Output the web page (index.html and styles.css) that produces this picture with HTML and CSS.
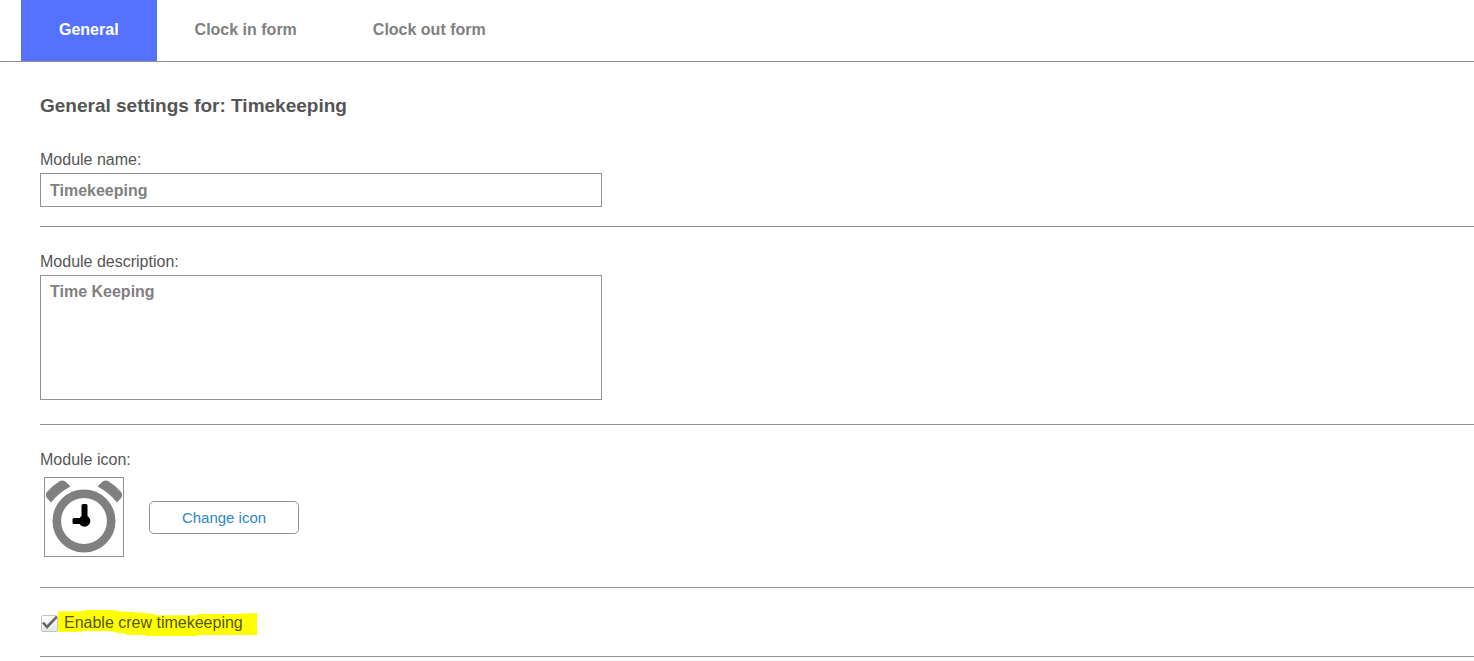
FILE: index.html
```html
<!DOCTYPE html>
<html lang="en">
	<head>
		<meta charset="utf-8">
		<title>Timekeeping settings</title>
		<link rel="stylesheet" href="styles.css">
	</head>
	<body>
		<nav class="tabs">
			<a href="#general" class="tab active">General</a>
			<a href="#clock-in" class="tab">Clock in form</a>
			<a href="#clock-out" class="tab">Clock out form</a>
		</nav>
		<form class="settings" id="general">
			<h1>General settings for: Timekeeping</h1>
			<div class="row row-name">
				<label class="caption" for="module-name">Module name:</label>
				<input type="text" class="field" id="module-name" name="name" value="Timekeeping">
			</div>
			<div class="row row-description">
				<label class="caption" for="module-description">Module description:</label>
				<textarea class="field" id="module-description" name="description">Time Keeping</textarea>
			</div>
			<div class="row row-icon">
				<div class="caption">Module icon:</div>
				<div class="icon-picker">
					<div class="icon-box">
						<svg viewBox="0 0 78 78" aria-hidden="true">
							<circle cx="39" cy="43" r="27.2" fill="none" stroke="#808080" stroke-width="8.6"/>
							<path fill="#808080" d="M6 24.500L1.500 19.500Q0 16.500 2 14Q8 7 15 3Q18.500 1.500 21 4L25.500 8.500Q14 14.500 6 24.500ZM72 24.500L76.500 19.500Q78 16.500 76 14Q70 7 63 3Q59.500 1.500 57 4L52.500 8.500Q64 14.500 72 24.500Z"/>
							<circle cx="39.500" cy="43" r="5.800"/>
							<path d="M38 26h3q1.500 0 1.500 1.500V43H36.500V27.500Q36.500 26 38 26ZM29 40H40V46H29Q27.500 46 27.500 44.500V41.500Q27.500 40 29 40Z"/>
						</svg>
					</div>
					<button type="button" class="change-icon">Change icon</button>
				</div>
			</div>
			<div class="row row-crew">
				<input type="checkbox" class="check" id="crew" name="crew" checked>
				<label class="crew-label" for="crew">
					<svg class="marker" viewBox="84 30 597 78" preserveAspectRatio="none" aria-hidden="true">
						<path fill="#ff0" d="M84 34H160L162 30H258L260 34L318 37L375 42V46H500L502 42H625L658 40L681 39V105H500L496 108H350L348 105L290 104L288 101L250 96L245 94L160 92L155 95L84 96Z"/>
					</svg>
					<span>Enable crew timekeeping</span>
				</label>
			</div>
		</form>
	</body>
</html>
```
FILE: styles.css
```css
* {
	box-sizing: border-box;
}

body {
	margin: 0;
	background: #fff;
	color: #555;
	font: 16px/20px Arial, "Liberation Sans", sans-serif;
}

/* tabs */
.tabs {
	display: flex;
	padding-left: 21px;
	border-bottom: 1px solid #919191;
}

.tab {
	padding: 20px 38px 21px;
	color: #808080;
	font-weight: bold;
	text-decoration: none;
}

.tab.active {
	background: #5472ff;
	color: #fff;
}

/* settings */
.settings {
	padding: 32px 0 0 40px;
}

h1 {
	margin: 0;
	font-size: 19px;
	line-height: 24px;
}

.row {
	padding-top: 25px;
	border-bottom: 1px solid #919191;
}

.row-name {
	padding-top: 32px;
	padding-bottom: 19px;
}

.row-description {
	padding-bottom: 24px;
}

.row-icon {
	padding-bottom: 30px;
}

.caption {
	display: block;
	margin-bottom: 3px;
}

.field {
	display: block;
	width: 562px;
	max-width: 100%;
	height: 34px;
	padding: 6px 9px 5px;
	border: 1px solid #919191;
	border-radius: 0;
	background: #fff;
	color: #808080;
	font: inherit;
	font-weight: bold;
	resize: none;
}

textarea.field {
	height: 125px;
}

.icon-picker {
	display: flex;
	align-items: center;
	gap: 25px;
	padding: 4px 4px 0;
}

.icon-box {
	width: 80px;
	height: 80px;
	border: 1px solid #919191;
}

.icon-box svg {
	display: block;
}

.change-icon {
	width: 150px;
	height: 33px;
	padding: 2px 0 0;
	border: 1px solid #919191;
	border-radius: 5px;
	background: #fff;
	color: #2e86c8;
	font: inherit;
	font-size: 15px;
}

/* crew */
.row-crew {
	display: flex;
	align-items: center;
	gap: 6px;
	padding-bottom: 23px;
}

.check {
	appearance: none;
	width: 17px;
	height: 17px;
	margin: 0 0 0 1px;
	border: 1px solid #c4c4c4;
	border-radius: 2px;
	background: linear-gradient(#fff, #e4e4e4);
}

.check:checked {
	background: url("data:image/svg+xml,%3Csvg xmlns='http://www.w3.org/2000/svg' viewBox='0 0 17 17'%3E%3Cpath d='M2 7.500L6 12L16 1.500' fill='none' stroke='%23666' stroke-width='2.600'/%3E%3C/svg%3E") center / 17px 17px no-repeat border-box, linear-gradient(#fff, #e4e4e4);
}

.crew-label {
	position: relative;
	color: #555500;
}

.crew-label span {
	position: relative;
}

/* highlighter stroke under the label */
.marker {
	position: absolute;
	top: -3px;
	left: -6px;
	width: 199px;
	height: 26px;
}
```
